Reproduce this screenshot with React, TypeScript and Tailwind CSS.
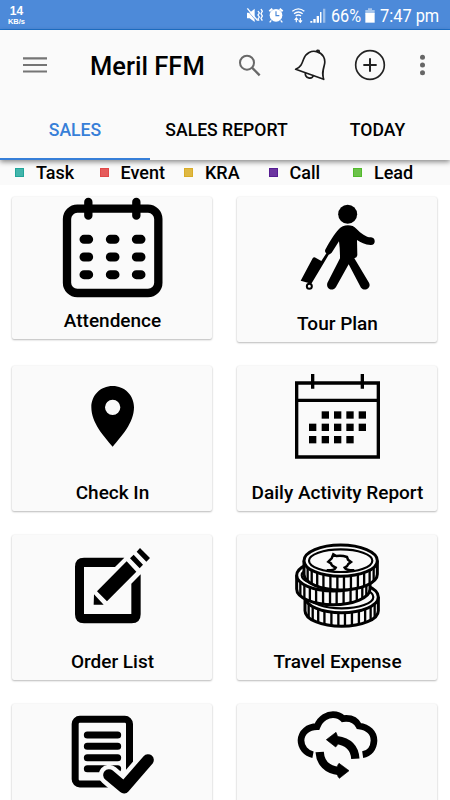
import type { ReactNode } from 'react';

const legend = [
  { label: 'Task', color: 'bg-[#43b5ac] border-[#22a599]' },
  { label: 'Event', color: 'bg-[#e55b5b] border-[#e04848]' },
  { label: 'KRA', color: 'bg-[#dfb843] border-[#d8ac28]' },
  { label: 'Call', color: 'bg-[#6c35a0] border-[#561d92]' },
  { label: 'Lead', color: 'bg-[#6cc24a] border-[#52b92c]' },
];

const tabs = ['SALES', 'SALES REPORT', 'TODAY'];

function StatusBar() {
  return (
    <div className="flex h-[30px] shrink-0 items-center border-b border-[#1f74cf] bg-[#4d8ad9] text-white">
      <div className="flex w-[33px] flex-col items-center pt-0.5 text-center font-['Liberation_Sans'] font-bold">
        <span className="text-[12px] leading-[12px]">14</span>
        <span className="text-[7.5px] leading-[9px]">KB/s</span>
      </div>
      <svg className="ml-[213px]" width="18" height="18" viewBox="63 18 54 54" fill="none" stroke="white" strokeWidth="3">
        <path d="M66 38h8l15-12v40L74 55h-8z" fill="white" stroke="none" />
        <path d="M66 30l29 34" stroke="#4d8ad9" strokeWidth="2" />
        <path d="M67 25l31 37" strokeWidth="4" />
        <path d="M99 33l4 6-4 6 4 6-4 6 3 5M108 27l4 7-4 7 4 7-4 7 4 7" strokeWidth="4" />
      </svg>
      <svg className="ml-1" width="16" height="18" viewBox="127 18 48 54" fill="none" stroke="white">
        <circle cx="151" cy="46" r="19" fill="white" stroke="none" />
        <path d="M131 34l9-8M171 34l-9-8" strokeWidth="6" />
        <path d="M137 61l-5 6M165 61l5 6" strokeWidth="4" />
        <path d="M151 34v13h10" stroke="#4d8ad9" strokeWidth="3.5" />
      </svg>
      <svg className="ml-[8px]" width="13" height="18" viewBox="200 18 39 54" fill="none" stroke="white" strokeWidth="4">
        <path d="M201 34q18-15 36 0M206 41q13-10 26 0M211 48q8-6 16 0" />
        <path d="M213 67V55m-5 5l5-6 5 6M225 54v12m-5-5l5 6 5-6" strokeWidth="3.5" />
      </svg>
      <svg className="ml-[5px]" width="16" height="18" viewBox="254 18 48 54" fill="white">
        <path d="M255 63h6v5h-6zM264 57h7v11h-7zM274 48h7v20h-7z" />
        <path d="M284 36h6v32h-6zM293 26h7v42h-7z" opacity=".45" />
        <path d="M284 36h3v32h-3z" />
      </svg>
      <span className="ml-[5px] w-[32px] origin-left scale-x-[.9] whitespace-nowrap pt-px text-[18px]">66%</span>
      <svg className="ml-[2px]" width="10" height="18" viewBox="420 18 30 54" fill="white">
        <path d="M429 25h12v5h8v11h-28V30h8z" opacity=".5" />
        <path d="M421 39h28v29h-28z" />
      </svg>
      <span className="ml-[5px] origin-left scale-x-[.91] whitespace-nowrap pt-px text-[18px]">7:47 pm</span>
    </div>
  );
}

function Toolbar() {
  return (
    <div className="flex h-[70px] items-center">
      <svg className="ml-[23px]" width="24" height="16" viewBox="69 170 72 48" stroke="#757575" strokeWidth="6.5">
        <path d="M69 174h72M69 194h72M69 213.500h72" />
      </svg>
      <h1 className="ml-[43px] w-[148px] whitespace-nowrap pt-0.5 text-[25.500px] font-medium">Meril FFM</h1>
      <svg width="23" height="23" viewBox="39 160 69 69" fill="none" stroke="#686868" strokeWidth="6">
        <circle cx="66" cy="186" r="21" />
        <path d="M81 201l23 23" strokeWidth="7" />
      </svg>
      <svg className="ml-[33px]" width="32" height="32" viewBox="207 147 96 96" fill="none" stroke="#1c1c1c" strokeWidth="5" strokeLinejoin="round">
        <path d="M212 208C228 201 231 191 236 177C243 158 260 151 275 155C294 160 303 177 298 195C293 213 291 222 296 238Z" />
        <path d="M274 155l3-4 5 1 1 6M241 217c-2 19 20 23 25 8" />
      </svg>
      <svg className="ml-7" width="32" height="32" viewBox="387 147 96 96" fill="none" stroke="#222" strokeWidth="5">
        <circle cx="435" cy="195" r="43" />
        <path d="M435 175v40M415 195h40" strokeWidth="6" />
      </svg>
      <svg className="ml-[33px]" width="7" height="24" viewBox="582 159 21 72" fill="#666">
        <circle cx="592.500" cy="172" r="7.500" />
        <circle cx="592.500" cy="195" r="7.500" />
        <circle cx="592.500" cy="218" r="7.500" />
      </svg>
    </div>
  );
}

function AttendanceIcon() {
  return (
    <g fill="none" stroke="black" strokeLinecap="round">
      <rect x="201" y="71" width="274" height="253" rx="31" strokeWidth="25" />
      <path d="M265 51v41M409 51v41" strokeWidth="25" />
      {[163, 216, 269].map((y) => (
        <path key={y} d={`M252 ${y}h14M331 ${y}h14M409 ${y}h14`} strokeWidth="27" />
      ))}
    </g>
  );
}

function TourIcon() {
  return (
    <g>
      <circle cx="368" cy="88" r="28.500" />
      <path d="M342 132C352 118 382 116 394 131C409 146 422 156 438 157C454 158 452 181 437 180C420 179 407 172 396 165L397 211Q396 218 388 220L432 293C440 308 420 322 408 308L371 238L333 306C322 322 302 311 307 294L345 220Q345 190 342 169L320 203Q315 208 311 209L295 236L259 296L227 287L263 220Q267 214 273 219L289 228L304 205Q296 199 304 188C317 166 325 151 342 132Z" />
      <circle cx="253" cy="304" r="7.500" fill="none" stroke="black" strokeWidth="6" />
    </g>
  );
}

function PinIcon() {
  return (
    <path
      fillRule="evenodd"
      d="M338 93C301 93 274 121 274 157C274 203 312 245 338 275C364 245 402 203 402 157C402 121 374 93 338 93ZM338 134a23 23 0 1 1 0 46a23 23 0 1 1 0-46Z"
    />
  );
}

function ReportIcon() {
  const rows = [
    { y: 169, xs: [290, 327, 364, 401] },
    { y: 206, xs: [252, 290, 327, 364, 401] },
    { y: 243, xs: [252, 290, 327, 364] },
  ];
  return (
    <g>
      <path d="M215 84h245v222H215zM215 136h245M263 57v44M412 57v44" fill="none" stroke="black" strokeWidth="10" />
      {rows.map((row) => row.xs.map((x) => <rect key={`${x}-${row.y}`} x={x} y={row.y} width="22" height="22" />))}
    </g>
  );
}

function OrderIcon() {
  return (
    <g>
      <path d="M373 98L345 126H252V267H394V176L422 148V268Q422 295 395 295H252Q225 295 225 268V125Q225 98 252 98Z" />
      <path d="M380 109L409 140L321 229L291 199ZM282 208L311 239H281ZM401 89L429 119L419 130L390 100ZM420 69L450 99L439 110L410 80Z" />
    </g>
  );
}

type CoinProps = { cx: number; cy: number };

function Coin({ cx, cy }: CoinProps) {
  const rx = 110;
  const ry = 47;
  const h = 41;
  const ribs = [-0.9, -0.79, -0.64, -0.47, -0.28, -0.09, 0.09, 0.28, 0.47, 0.64, 0.79, 0.9];
  return (
    <g fill="#fafafa" stroke="black" strokeWidth="9">
      <path d={`M${cx - rx} ${cy}v${h}a${rx} ${ry} 0 0 0 ${rx * 2} 0v${-h}`} />
      {ribs.map((r) => (
        <path key={r} d={`M${cx + r * rx} ${cy + ry * Math.sqrt(1 - r * r)}v${h}`} strokeWidth="7" />
      ))}
      <ellipse cx={cx} cy={cy} rx={rx} ry={ry} />
      <ellipse cx={cx} cy={cy} rx={rx - 15} ry={ry - 13} strokeWidth="6.500" />
    </g>
  );
}

function CoinsIcon() {
  return (
    <g>
      <Coin cx={350} cy={216} />
      <Coin cx={325} cy={151} />
      <Coin cx={347} cy={107} />
      <path
        d="M305 136Q328 137 332 128Q318 122 318 115L310 110L320 100L325 88L334 93Q350 90 366 96L369 104L378 111L370 117Q368 124 359 128Q364 137 388 136"
        fill="none"
        stroke="black"
        strokeWidth="7.500"
      />
    </g>
  );
}

function TaskListIcon() {
  return (
    <g fill="none" stroke="black" strokeLinecap="round">
      <rect x="225.500" y="88" width="163" height="194" rx="14" strokeWidth="21" />
      <path d="M262 135h91M262 169h91M262 203h91M262 236h91" strokeWidth="21" />
      <path d="M327 255L372 294L444 210" stroke="#fafafa" strokeWidth="62" strokeLinejoin="round" />
      <path d="M327 255L372 293L444 210" strokeWidth="35" strokeLinejoin="round" />
    </g>
  );
}

function SyncIcon() {
  return (
    <g fill="none" stroke="black" strokeWidth="20">
      <path d="M264 194C243 190 228 172 228 151C229 127 249 110 276 110C287 82 310 74 324 74C338 74 346 78 354 86C378 83 394 92 402 108C430 112 447 129 447 152C446 175 433 191 413 194" />
      <path d="M335 150C369 155 389 174 391 206M284 186C286 218 307 240 342 243" strokeWidth="25" />
      <path d="M304 149L333 127L337 137V165L332 171ZM342 220L372 242L343 265L338 258V226Z" fill="black" strokeWidth="2" />
    </g>
  );
}

type CardProps = { label?: string; viewBox: string; short?: boolean; children: ReactNode };

function Card({ label, viewBox, short, children }: CardProps) {
  return (
    <button
      className={`flex w-full flex-col items-center self-start rounded-[2px] bg-[#fafafa] shadow-[0_1px_2px_rgba(0,0,0,0.25),0_0_2px_rgba(0,0,0,0.08)] ${
        short ? 'h-[142px]' : 'h-[145px]'
      }`}
    >
      <svg className="shrink-0" width="200" height="110" viewBox={viewBox}>
        {children}
      </svg>
      {label && (
        <span className={`pl-px text-[19px] leading-6 font-medium whitespace-nowrap ${short ? 'mt-0.5' : 'mt-[5px]'}`}>{label}</span>
      )}
    </button>
  );
}

export default function App() {
  return (
    <div className="flex h-[800px] w-[450px] flex-col overflow-hidden bg-white font-[Roboto,sans-serif] text-black">
      <StatusBar />
      <header className="relative shrink-0 bg-[#fafafa] shadow-[0_2px_5px_rgba(0,0,0,0.45)]">
        <Toolbar />
        <nav className="grid h-[60px] grid-cols-[150px_153px_149px]">
          {tabs.map((tab, i) => (
            <button
              key={tab}
              className={`text-[17.600px] font-medium whitespace-nowrap ${
                i === 0 ? 'border-b-[2.500px] border-[#377fd8] pt-[3px] text-[#377fd8]' : 'pt-px'
              }`}
            >
              {tab}
            </button>
          ))}
        </nav>
      </header>
      <div className="flex h-[25px] shrink-0 items-center bg-[#fafafa] pl-[15px]">
        {legend.map((item) => (
          <div key={item.label} className="flex w-[84.500px] shrink-0 items-center gap-3">
            <span className={`size-[9px] border ${item.color}`} />
            <span className="text-[18px] leading-6 font-medium">{item.label}</span>
          </div>
        ))}
      </div>
      <main className="grid grid-cols-2 gap-x-[25px] gap-y-6 pt-3 pr-[13px] pl-3">
        <Card label="Attendence" viewBox="36 36 600 330" short>
          <AttendanceIcon />
        </Card>
        <Card label="Tour Plan" viewBox="36 36 600 330">
          <TourIcon />
        </Card>
        <Card label="Check In" viewBox="36 33 600 330">
          <PinIcon />
        </Card>
        <Card label="Daily Activity Report" viewBox="36 33 600 330">
          <ReportIcon />
        </Card>
        <Card label="Order List" viewBox="36 30 600 330">
          <OrderIcon />
        </Card>
        <Card label="Travel Expense" viewBox="36 30 600 330">
          <CoinsIcon />
        </Card>
        <Card viewBox="36 42 600 330">
          <TaskListIcon />
        </Card>
        <Card viewBox="36 42 600 330">
          <SyncIcon />
        </Card>
      </main>
    </div>
  );
}
